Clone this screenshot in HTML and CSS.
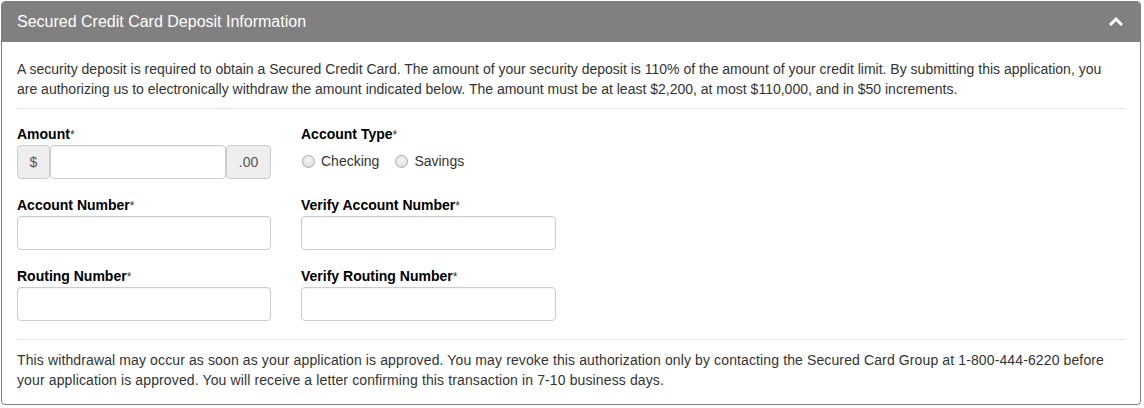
FILE: index.html
```html
<!DOCTYPE html>
<html>
<head>
<meta charset="utf-8">
<link rel="stylesheet" href="styles.css">
</head>
<body>
<section class="panel">
  <header class="panel-heading">
    <h2 class="panel-title">Secured Credit Card Deposit Information</h2>
    <svg class="chevron" width="14" height="10" viewBox="0 0 14 10"><path d="M2 8 L7 3 L12 8" fill="none" stroke="#fff" stroke-width="3" stroke-linecap="square"/></svg>
  </header>
  <div class="panel-body">
    <p class="intro">A security deposit is required to obtain a Secured Credit Card. The amount of your security deposit is 110% of the amount of your credit limit. By submitting this application, you are authorizing us to electronically withdraw the amount indicated below. The amount must be at least $2,200, at most $110,000, and in $50 increments.</p>
    <hr class="rule">
    <div class="form-grid">
      <div class="field">
        <label class="label">Amount<span class="req">*</span></label>
        <div class="input-group">
          <span class="addon addon-left">$</span>
          <input class="input grow" type="text">
          <span class="addon addon-right">.00</span>
        </div>
      </div>
      <div class="field">
        <label class="label">Account Type<span class="req">*</span></label>
        <div class="radios">
          <label class="radio"><input type="radio" name="t" class="radio-input"> Checking</label>
          <label class="radio"><input type="radio" name="t" class="radio-input"> Savings</label>
        </div>
      </div>
      <div class="field">
        <label class="label">Account Number<span class="req">*</span></label>
        <input class="input" type="text">
      </div>
      <div class="field">
        <label class="label">Verify Account Number<span class="req">*</span></label>
        <input class="input" type="text">
      </div>
      <div class="field">
        <label class="label">Routing Number<span class="req">*</span></label>
        <input class="input" type="text">
      </div>
      <div class="field">
        <label class="label">Verify Routing Number<span class="req">*</span></label>
        <input class="input" type="text">
      </div>
    </div>
    <hr class="rule rule-bottom">
    <p class="outro">This withdrawal may occur as soon as your application is approved. You may revoke this authorization only by contacting the Secured Card Group at 1-800-444-6220 before your application is approved. You will receive a letter confirming this transaction in 7-10 business days.</p>
  </div>
</section>
</body>
</html>
```
FILE: styles.css
```css
* { box-sizing: border-box; }
html, body { margin: 0; padding: 0; background: #fff; }
body {
  font-family: "Liberation Sans", Arial, sans-serif;
  font-size: 14px;
  line-height: 20px;
  color: #333;
}
.panel {
  margin: 1px 0 0 1px;
  width: 1140px;
  border: 1px solid #808080;
  border-radius: 4px;
  overflow: hidden;
}
.panel-heading {
  background: #808080;
  height: 41px;
  margin: -1px -1px 0 -1px;
  padding: 1px 16px 0 16px;
  display: flex;
  align-items: center;
  justify-content: space-between;
}
.panel-title {
  margin: 0;
  font-size: 16px;
  font-weight: normal;
  color: #fff;
  line-height: 20px;
}
.chevron { display: block; margin-top: -3px; margin-right: 2px; }
.panel-body { padding: 17px 15px 14px 15px; }
.intro { margin: 0 0 9px 0; }
.rule { border: 0; border-top: 1px solid #e5e5e5; margin: 0; }
.form-grid {
  display: grid;
  grid-template-columns: 254px 255px;
  column-gap: 30px;
  row-gap: 16px;
  padding-top: 15px;
}
.field { display: flex; flex-direction: column; }
.label {
  font-weight: bold;
  color: #000;
  margin-bottom: 1px;
  height: 20px;
}
.req { font-weight: normal; font-size: 12px; color: #333; }
.input {
  height: 34px;
  border: 1px solid #ccc;
  border-radius: 4px;
  background: #fff;
  padding: 6px 12px;
  font: inherit;
  width: 100%;
  margin: 0;
  box-shadow: inset 0 1px 1px rgba(0,0,0,0.05);
}
.input-group { display: flex; }
.input.grow { flex: 1; width: auto; min-width: 0; }
.addon {
  height: 34px;
  background: #eee;
  border: 1px solid #ccc;
  border-radius: 4px;
  display: flex;
  align-items: center;
  justify-content: center;
  color: #555;
  font-size: 14px;
}
.addon-left { width: 33px; }
.addon-right { width: 45px; }
.radios { display: flex; gap: 15px; height: 34px; align-items: flex-start; padding-top: 6px; }
.radio { display: flex; align-items: center; gap: 6px; color: #333; }
.radio-input {
  appearance: none;
  -webkit-appearance: none;
  width: 13px;
  height: 13px;
  margin: 0 0 0 1px;
  border-radius: 50%;
  border: 1px solid #aaa;
  background: radial-gradient(circle at 50% 35%, #f4f4f4 0%, #dcdcdc 100%);
}
.rule-bottom { margin-top: 18px; }
.outro { margin: 10px 0 0 0; letter-spacing: 0.12px; }
```
